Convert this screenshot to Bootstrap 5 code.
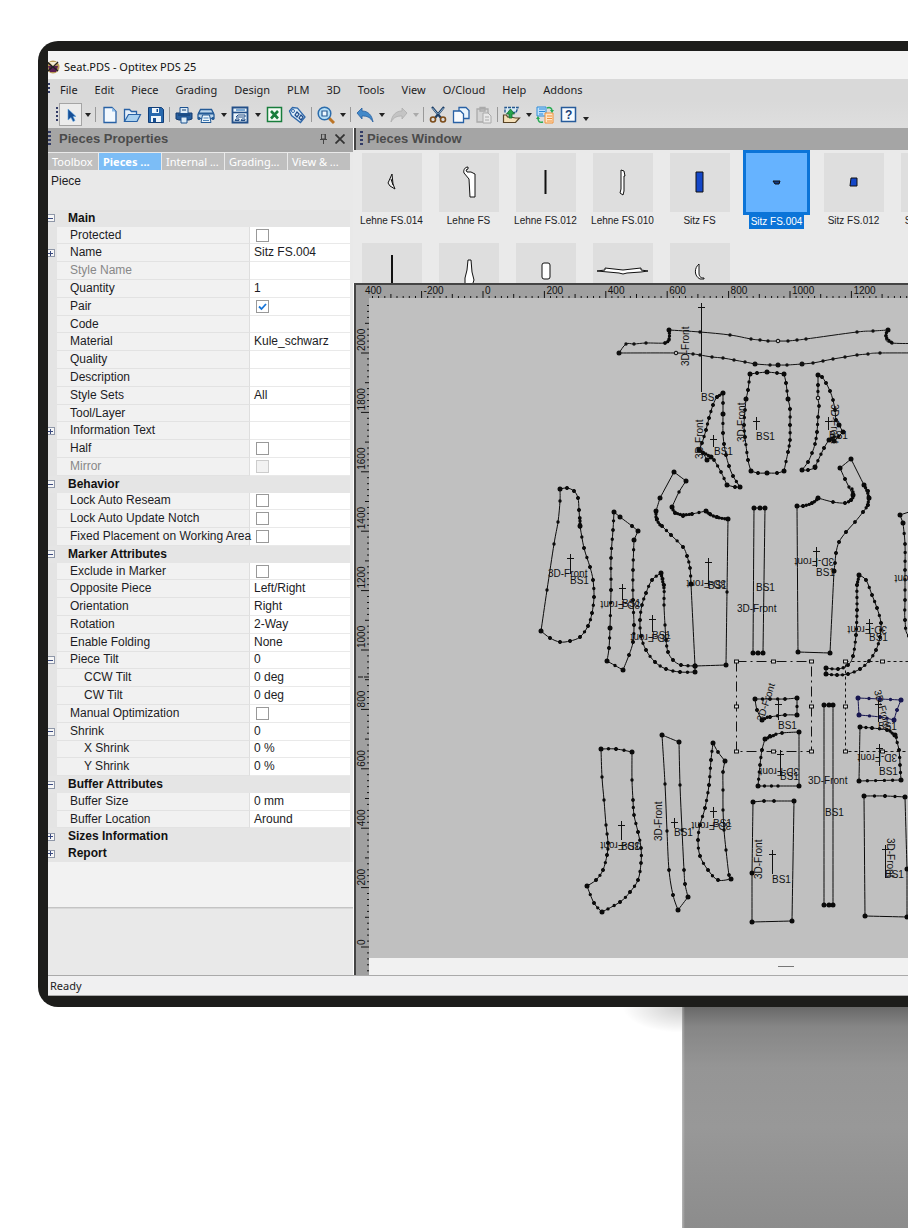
<!DOCTYPE html>
<html lang="en">
<head>
<meta charset="utf-8">
<meta name="viewport" content="width=device-width, initial-scale=1">
<title>Seat.PDS - Optitex PDS 25</title>
<link href="https://cdn.jsdelivr.net/npm/bootstrap@5.3.0/dist/css/bootstrap.min.css" rel="stylesheet">
<style>
body{font-family:"Liberation Sans",Arial,sans-serif;font-size:12px;line-height:16px;color:#1c1c24;background:#fff;overflow-x:hidden}
button{font:inherit;color:inherit;border:0;background:none;padding:0}
.monitor{margin:41px 0 0 38px;padding:10px 0 11px 10px;background:#1d1d1b;border-radius:20px 0 0 20px;position:relative;z-index:1}
.screen{background:#e9e9e9;overflow:hidden}
.ui{font-family:"Noto Sans","Open Sans",sans-serif;font-size:11px}
.titlebar{height:28px;background:#f3f3f3;color:#111;padding-top:3px}
.menus{height:22px;background:#d9d9d9;gap:17px;padding-left:12px;position:relative}
.grip{width:3px;background:repeating-linear-gradient(#333c66 0 2px,transparent 2px 4px)}
.menus .grip{position:absolute;left:0;top:4px;height:12px;width:2px}
.tools{height:27px;background:linear-gradient(#d9d9d9,#dedede);padding-left:8px;position:relative}
.tools .grip{height:16px;width:2px;margin-right:1px}
.tool{width:23px;height:23px;flex:none;display:flex;align-items:center;justify-content:center}
.tool.picked{background:#ececec;outline:1px solid #a5a5a5;outline-offset:-1px}
.drop{width:11px;height:20px;flex:none;display:flex;align-items:center;justify-content:center}
.drop::after{content:"";border:3px solid transparent;border-top:4px solid #222;border-bottom:0}
.drop:disabled::after{border-top-color:#aaa}
.bar{width:5px;height:15px;flex:none;background:linear-gradient(90deg,transparent 2px,#999 2px 3px,transparent 3px)}
.props{width:306px;flex:none;border-right:1px solid #fff}
.pane-title{height:22px;background:#a5a5a5;color:#4b4b4b;font-weight:700;font-size:13px}
.pane-title .grip{height:16px}
.tabs{background:linear-gradient(#a5a5a5 2px,#e9e9e9 2px);padding-top:3px;gap:1px}
.tabs button{height:17px;width:62px;background:#bfbfbf;color:#fff;line-height:17px;white-space:nowrap;overflow:hidden;text-align:left;padding-left:4px}
.tabs button:first-child{width:50px}
.tabs .current{background:#7cbdf6;font-weight:700}
.about{height:40px;padding:3px;line-height:16px}
.grid{width:302px;height:652px;border-collapse:separate;border-spacing:0;table-layout:fixed}
.grid td,.grid th{padding:0;line-height:15px;font-weight:400;vertical-align:middle;white-space:nowrap}
.grid .g{width:9px;background:#e4e4e4;overflow:hidden}
.grid .n{width:193px;background:#f1f1f1;padding-left:13px;border-bottom:1px solid #e2e2e2;border-right:1px solid #dedede;overflow:visible}
.grid .v{background:#fff;border-bottom:1px solid #e9e9e9;padding-left:4px}
.grid .cat th{background:#e5e5e5;font-weight:700;color:#111;padding-left:11px}
.grid .cat .g{background:#e5e5e5}
.grid .sub .n{padding-left:27px}
.grid .off{color:#888}
.grid input{appearance:none;width:13px;height:13px;border:1px solid #999;background:#fff;margin:0 0 0 2px;display:block}
.grid input:disabled{background:#f2f2f2;border-color:#ccc}
.grid input:checked{background:#fff url("data:image/svg+xml,%3Csvg xmlns='http://www.w3.org/2000/svg' viewBox='0 0 11 11'%3E%3Cpath d='M2 5.5l2.500 2.500L9 3' fill='none' stroke='%231976d8' stroke-width='1.800'/%3E%3C/svg%3E")}
.tw{display:block;width:7px;height:8px;border:1px solid #8f97a8;border-left:0;background:linear-gradient(#3a4a80,#3a4a80) 0 50%/5px 1px no-repeat #f6f6f6}
.tw.plus{background:linear-gradient(#3a4a80,#3a4a80) 0 50%/5px 1px no-repeat,linear-gradient(#3a4a80,#3a4a80) 2px 50%/1px 5px no-repeat #f6f6f6}
.blank{height:46px;background:#f2f2f2;border-bottom:1px solid #c4c4c4;box-shadow:0 1px #d8d8d8}
.help-pane{height:67px}
.work{border-left:2px solid #444;min-width:0}
.thumbs{height:133px;overflow:hidden;display:grid;grid-template-columns:repeat(8,77px);grid-auto-rows:90px;border-bottom:0;background:#eaeaea;margin-left:-3px;padding-top:3px}
.thumb{font-size:10px;line-height:12px;display:flex;flex-direction:column;align-items:center;white-space:nowrap}
.thumb svg{width:60px;height:59px;background:#dedede;flex:none}
.thumb span{margin-top:3px;padding:0 1px}
.thumb.on{margin-top:-3px}
.thumb.on svg{width:67px;height:65px;background:#66b3ff;border:3px solid #0b74d8}
.thumb.on span{margin-top:0;padding:0 2px 1px;background:#0b74d8;color:#fff;line-height:13px}
.hruler{height:15px;background:#a0a0a0;border-top:2px solid #444;display:block;width:100%}
.vruler{width:13px;background:#a0a0a0;flex:none}
.canvas{background:#c0c0c0;display:block;width:100%;flex:1 1 0;min-height:0}
.hscroll{height:17px;background:#f1f1f1}
.hscroll i{display:block;width:16px;height:1px;background:#777;position:absolute;left:409px;top:8px}
svg text{font:10px "Liberation Sans",Arial,sans-serif;fill:#111}
.status{height:21px;background:#f0f0f1;border-top:1px solid #aaa;box-shadow:inset 0 -1px #aaa;line-height:20px;padding-left:2px}
.stand{margin-left:682px;flex:1 0 221px;background:linear-gradient(90deg,rgba(255,255,255,.35),transparent 3px),linear-gradient(#686868,#868686 20px,#959595 60px,#989898 120px,#8c8c8c)}
.cast{position:absolute;left:584px;bottom:-26px;width:60px;height:26px;background:radial-gradient(ellipse at 100% 0,rgba(0,0,0,.2),transparent 70%)}
</style>
</head>
<body class="d-flex flex-column min-vh-100">
<main class="monitor">
<div class="screen">
<header class="ui">
<div class="titlebar d-flex align-items-center">
<svg width="12" height="14" viewBox="0 0 12 14"><circle cx="5" cy="7" r="6.500" fill="#b89a58"/><path d="M0 6h10L8 12H2z" fill="#5b1f52"/><path d="M-1 2l11 9M10 2L0 11" stroke="#222" stroke-width="1.600"/><path d="M1 2l4 4 4-4" fill="#f2ead0"/></svg>
<span class="ps-1">Seat.PDS - Optitex PDS 25</span>
</div>
<nav class="menus d-flex align-items-center" aria-label="Main menu"><span class="grip"></span>
<button>File</button><button>Edit</button><button>Piece</button><button>Grading</button><button>Design</button><button>PLM</button><button>3D</button><button>Tools</button><button>View</button><button>O/Cloud</button><button>Help</button><button>Addons</button>
</nav>
<div class="tools d-flex align-items-center" role="toolbar" aria-label="Standard"><span class="grip"></span>
<button class="tool picked" aria-label="Select"><svg width="16" height="16"><path d="M5 2v11l3-2.500 2 4 2-1-2-4h3z" fill="#174f96" stroke="#5ea4e0" stroke-width=".600"/></svg></button><button class="drop" aria-label="Select options"></button><span class="bar"></span>
<button class="tool" aria-label="New"><svg width="18" height="18"><path d="M3 1.500h8l4 4v11H3z" fill="#f2f8fe" stroke="#2861a5" stroke-width="1.300"/><path d="M11 1.500v4h4z" fill="#8dbbe8"/></svg></button>
<button class="tool" aria-label="Open"><svg width="19" height="18"><path d="M1.500 15.500V3.500h5l2 2h5v3" fill="#e5eff9" stroke="#2861a5" stroke-width="1.300"/><path d="M1.500 15.500l4-7h12l-3.500 7z" fill="#a9d0ef" stroke="#2861a5" stroke-width="1.200"/></svg></button>
<button class="tool" aria-label="Save"><svg width="18" height="18"><path d="M1.500 1.500h13l2 2v13h-15z" fill="#2768ad" stroke="#123e78"/><path d="M5 2h7v5H5zM4 10h10v6H4z" fill="#eef5fb"/><path d="M9.500 3h1.500v3H9.500zM6 12h3v4H6z" fill="#174e91"/></svg></button><span class="bar"></span>
<button class="tool" aria-label="Print"><svg width="18" height="18"><path d="M1 7h16v6l-3 1H4l-3-1z" fill="#285f9d" stroke="#143b6e"/><path d="M5 1.500h8v6H5zM6 11h6v6H6z" fill="#dcebf7" stroke="#1d5290"/><path d="M7 4h4M3 9h12" stroke="#123b6c"/></svg></button>
<button class="tool" aria-label="Plot"><svg width="19" height="18"><path d="M3.500 3.500h11l2.500 5v4H1v-4z" fill="#bcd5ea" stroke="#245a96" stroke-width="1.300"/><path d="M1 7.500h16M2 11v3M16 11v3" stroke="#245a96" stroke-width="1.800"/><path d="M5.500 9h7l1.500 7.500H4z" fill="#eaf4fb" stroke="#245a96"/><path d="M6.500 12h5M6 14.500h6" stroke="#4c83b8"/></svg></button><button class="drop" aria-label="Plot options"></button>
<button class="tool" aria-label="Layout"><svg width="19" height="18"><path d="M1.500 1.500h15v15h-15z" fill="#eaf4fb" stroke="#234f88" stroke-width="1.800"/><path d="M2 6.500h15" stroke="#234f88" stroke-width="1.600"/><path d="M5 4h9" stroke="#5b93c8" stroke-width="1.500"/><path d="M5 11l2-2h7v2zM4 14.500l1-1.500h3v1.500zM10 14.500l1-1.500h3v1.500z" fill="#fff" stroke="#234f88"/></svg></button><button class="drop" aria-label="Layout options"></button>
<button class="tool" aria-label="Excel"><svg width="17" height="17"><path d="M1.500 1.500h14v14h-14z" fill="#f4fbf5" stroke="#187d3c" stroke-width="1.500"/><path d="M5 5l7 7.500M12 5l-7 7.500" stroke="#187d3c" stroke-width="2.600"/></svg></button>
<button class="tool" aria-label="Tag"><svg width="19" height="18"><path d="M1.500 5l3-3.500 5 .500 7.500 9-4.500 5.500-9-7z" fill="#dcecf8" stroke="#2f68aa" stroke-width="1.300"/><circle cx="5" cy="5" r="1.500" fill="#fff" stroke="#2f68aa"/><path d="M7 9l2-3 2 2-2 3zM11 12l2-3 2 2-2 3z" fill="none" stroke="#1e4b8b" stroke-width="1.300"/></svg></button><span class="bar"></span>
<button class="tool" aria-label="Zoom"><svg width="18" height="18"><path d="M11 11l6 6" stroke="#bb7527" stroke-width="3"/><circle cx="7.500" cy="7.500" r="6.300" fill="#b7dff6" stroke="#2b6cac" stroke-width="1.500"/><path d="M5 5h5v5H5z" fill="#eff8fe" stroke="#295b91" stroke-width="1.200"/></svg></button><button class="drop" aria-label="Zoom options"></button><span class="bar"></span>
<button class="tool" aria-label="Undo"><svg width="18" height="18"><path d="M1 7l5-5v3c6 0 10 4 11 11-3-5-6-6-11-6v3z" fill="#4389c9" stroke="#235d9e" stroke-width=".800"/></svg></button><button class="drop" aria-label="Undo list"></button>
<button class="tool" aria-label="Redo" disabled><svg width="18" height="18"><path d="M17 7l-5-5v3C6 5 2 9 1 16c3-5 6-6 11-6v3z" fill="#c4c4c4" stroke="#adadad" stroke-width=".800"/></svg></button><button class="drop" aria-label="Redo list" disabled></button><span class="bar"></span>
<button class="tool" aria-label="Cut"><svg width="18" height="18"><path d="M3 1l9 11M15 1L6 12" stroke="#1d3e65" stroke-width="2.200"/><path d="M3.500 2l5 6M14.500 2l-5 6" stroke="#acd1ee" stroke-width=".800"/><circle cx="4" cy="13.500" r="2.500" fill="none" stroke="#7c4c1a" stroke-width="1.600"/><circle cx="14" cy="13.500" r="2.500" fill="none" stroke="#7c4c1a" stroke-width="1.600"/></svg></button>
<button class="tool" aria-label="Copy"><svg width="18" height="18"><path d="M7 1.500h7l3 3v8H7z" fill="#e9f4fc" stroke="#2861a5" stroke-width="1.300"/><path d="M1.500 5h7l3 3v8.500h-10z" fill="#f8fbfe" stroke="#2861a5" stroke-width="1.300"/></svg></button>
<button class="tool" aria-label="Paste" disabled><svg width="18" height="18"><path d="M2 3h11v13H2zM5 1.500h5V5H5z" fill="#d4d4d4" stroke="#aaa" stroke-width="1.300"/><path d="M8 7h5l3 3v7H8zM10 11h4M10 14h4" fill="#e8e8e8" stroke="#aaa"/></svg></button><span class="bar"></span>
<button class="tool" aria-label="Export"><svg width="19" height="18"><path d="M3 6.500V1.500h13l-2 5h-3" fill="#d9eaf6" stroke="#24588f" stroke-width="1.400" stroke-dasharray="3 1"/><path d="M1.500 16.500V9h3l1 2h3l5 1h4l-4 4.500z" fill="#f4dfb8" stroke="#574325" stroke-width="1.200"/><path d="M7 12V8H4.500L8.500 3l4 5H10v4z" fill="#26a44b" stroke="#166b32" stroke-width=".800"/></svg></button><button class="drop" aria-label="Export options"></button>
<button class="tool" aria-label="Convert"><svg width="19" height="18"><path d="M1 1h9v9H1zM3 3h6M3 5.500h6M3 8h4" fill="#bfe0fa" stroke="#2c8ad9"/><path d="M9 7h8v10H9zM11 10h5M11 12.500h5M11 15h5" fill="#ffe5c5" stroke="#f0923b"/><path d="M11 2c3-1 5 0 5 3M7 16c-4 1-5-1-5-4" fill="none" stroke="#27ab54" stroke-width="1.500"/><path d="M14 4h4l-2 3zM0 13h4l-2-3z" fill="#27ab54"/></svg></button>
<button class="tool" aria-label="Help"><svg width="17" height="17"><path d="M1.500 1.500h14v14h-14z" fill="#f7fbff" stroke="#275b9b" stroke-width="1.500"/><text x="5" y="13" style="font-size:12px;font-weight:700;fill:#173f78">?</text></svg></button><button class="drop mt-2" aria-label="More"></button>
</div>
</header>
<div class="d-flex">
<section class="props">
<h2 class="pane-title d-flex align-items-center m-0"><span class="grip me-2"></span><span class="me-auto ms-n2">Pieces Properties</span>
<button class="me-2" aria-label="Pin"><svg width="7" height="10" class="d-block"><path d="M1.500 0v5h4V0zM0 5.500h7M3.500 5v5M5 0v5" fill="none" stroke="#444"/></svg></button>
<button class="me-2" aria-label="Close"><svg width="10" height="10" class="d-block"><path d="M.500.500l9 9M9.500.500l-9 9" stroke="#333" stroke-width="1.800"/></svg></button></h2>
<div class="tabs d-flex ui"><button>Toolbox</button><button class="current">Pieces ...</button><button>Internal ...</button><button>Grading...</button><button>View &amp; ...</button></div>
<div class="about">Piece</div>
<table class="grid">
<colgroup><col style="width:9px"><col style="width:193px"><col></colgroup>
<tbody>
<tr class="cat"><td class="g"><span class="tw"></span></td><th colspan="2">Main</th></tr>
<tr><td class="g"></td><td class="n"><label for="c1">Protected</label></td><td class="v"><input type="checkbox" id="c1"></td></tr>
<tr><td class="g"><span class="tw plus"></span></td><td class="n">Name</td><td class="v">Sitz FS.004</td></tr>
<tr><td class="g"></td><td class="n off">Style Name</td><td class="v"></td></tr>
<tr><td class="g"></td><td class="n">Quantity</td><td class="v">1</td></tr>
<tr><td class="g"></td><td class="n"><label for="c2">Pair</label></td><td class="v"><input type="checkbox" id="c2" checked></td></tr>
<tr><td class="g"></td><td class="n">Code</td><td class="v"></td></tr>
<tr><td class="g"></td><td class="n">Material</td><td class="v">Kule_schwarz</td></tr>
<tr><td class="g"></td><td class="n">Quality</td><td class="v"></td></tr>
<tr><td class="g"></td><td class="n">Description</td><td class="v"></td></tr>
<tr><td class="g"></td><td class="n">Style Sets</td><td class="v">All</td></tr>
<tr><td class="g"></td><td class="n">Tool/Layer</td><td class="v"></td></tr>
<tr><td class="g"><span class="tw plus"></span></td><td class="n">Information Text</td><td class="v"></td></tr>
<tr><td class="g"></td><td class="n"><label for="c3">Half</label></td><td class="v"><input type="checkbox" id="c3"></td></tr>
<tr><td class="g"></td><td class="n off"><label for="c4">Mirror</label></td><td class="v"><input type="checkbox" id="c4" disabled></td></tr>
<tr class="cat"><td class="g"><span class="tw"></span></td><th colspan="2">Behavior</th></tr>
<tr><td class="g"></td><td class="n"><label for="c5">Lock Auto Reseam</label></td><td class="v"><input type="checkbox" id="c5"></td></tr>
<tr><td class="g"></td><td class="n"><label for="c6">Lock Auto Update Notch</label></td><td class="v"><input type="checkbox" id="c6"></td></tr>
<tr><td class="g"></td><td class="n"><label for="c7">Fixed Placement on Working Area</label></td><td class="v"><input type="checkbox" id="c7"></td></tr>
<tr class="cat"><td class="g"><span class="tw"></span></td><th colspan="2">Marker Attributes</th></tr>
<tr><td class="g"></td><td class="n"><label for="c8">Exclude in Marker</label></td><td class="v"><input type="checkbox" id="c8"></td></tr>
<tr><td class="g"></td><td class="n">Opposite Piece</td><td class="v">Left/Right</td></tr>
<tr><td class="g"></td><td class="n">Orientation</td><td class="v">Right</td></tr>
<tr><td class="g"></td><td class="n">Rotation</td><td class="v">2-Way</td></tr>
<tr><td class="g"></td><td class="n">Enable Folding</td><td class="v">None</td></tr>
<tr><td class="g"><span class="tw"></span></td><td class="n">Piece Tilt</td><td class="v">0</td></tr>
<tr class="sub"><td class="g"></td><td class="n">CCW Tilt</td><td class="v">0 deg</td></tr>
<tr class="sub"><td class="g"></td><td class="n">CW Tilt</td><td class="v">0 deg</td></tr>
<tr><td class="g"></td><td class="n"><label for="c9">Manual Optimization</label></td><td class="v"><input type="checkbox" id="c9"></td></tr>
<tr><td class="g"><span class="tw"></span></td><td class="n">Shrink</td><td class="v">0</td></tr>
<tr class="sub"><td class="g"></td><td class="n">X Shrink</td><td class="v">0 %</td></tr>
<tr class="sub"><td class="g"></td><td class="n">Y Shrink</td><td class="v">0 %</td></tr>
<tr class="cat"><td class="g"><span class="tw"></span></td><th colspan="2">Buffer Attributes</th></tr>
<tr><td class="g"></td><td class="n">Buffer Size</td><td class="v">0 mm</td></tr>
<tr><td class="g"></td><td class="n">Buffer Location</td><td class="v">Around</td></tr>
<tr class="cat"><td class="g"><span class="tw plus"></span></td><th colspan="2">Sizes Information</th></tr>
<tr class="cat"><td class="g"><span class="tw plus"></span></td><th colspan="2">Report</th></tr>
</tbody></table>
<div class="blank"></div><div class="help-pane"></div>
</section>
<section class="work flex-grow-1 d-flex flex-column">
<h2 class="pane-title d-flex align-items-center m-0"><span class="grip ms-1 me-1"></span><span>Pieces Window</span></h2>
<div class="thumbs">
<button class="thumb"><svg viewBox="0 0 60 59"><path d="M30 21l-4 9 2 3 5 3-2-5zM29 26l2 6" fill="#eee" stroke="#111"/></svg><span>Lehne FS.014</span></button>
<button class="thumb"><svg viewBox="0 0 60 59"><path d="M29 14c-3 0-5 3-4 6l5 6 1 18h5V21l-4-2h-4l-1-2 2-1z" fill="#fff" stroke="#111"/></svg><span>Lehne FS</span></button>
<button class="thumb"><svg viewBox="0 0 60 59"><path d="M29.500 17v24" stroke="#111" stroke-width="2"/></svg><span>Lehne FS.012</span></button>
<button class="thumb"><svg viewBox="0 0 60 59"><path d="M28 17v19l-1 4 3 2 1-4V23h1l-1-5z" fill="#fff" stroke="#111"/></svg><span>Lehne FS.010</span></button>
<button class="thumb"><svg viewBox="0 0 60 59"><path d="M26 19h7v20h-7z" fill="#1447c8" stroke="#111"/></svg><span>Sitz FS</span></button>
<button class="thumb on"><svg viewBox="0 0 61 59"><path d="M27 28h7l-1 3h-4z" fill="#123c86" stroke="#111"/></svg><span>Sitz FS.004</span></button>
<button class="thumb"><svg viewBox="0 0 60 59"><path d="M27 25h6v8h-7z" fill="#1447c8" stroke="#111"/></svg><span>Sitz FS.012</span></button>
<button class="thumb"><svg viewBox="0 0 60 59"></svg><span>Sitz FS.010</span></button>
<button class="thumb" aria-label="Piece 9"><svg viewBox="0 0 60 59"><path d="M30 12v40" stroke="#111" stroke-width="2"/></svg></button>
<button class="thumb" aria-label="Piece 10"><svg viewBox="0 0 60 59"><path d="M29 17h3l1 12 2 8-2 6h-7v-8l2-8z" fill="#fff" stroke="#111"/></svg></button>
<button class="thumb" aria-label="Piece 11"><svg viewBox="0 0 60 59"><rect x="26" y="20" width="8" height="16" rx="2" fill="#fff" stroke="#111"/></svg></button>
<button class="thumb" aria-label="Piece 12"><svg viewBox="0 0 60 59"><path d="M4 28l8-1v-2l18 2 18-2v2l7 1-7 1-14 1-4 1-4-1z" fill="#fff" stroke="#111"/></svg></button>
<button class="thumb" aria-label="Piece 13"><svg viewBox="0 0 60 59"><path d="M29 21c-5 4-5 12 1 15h4v-1c-4 0-5-2-5-5z" fill="#fff" stroke="#111"/></svg></button>
</div>
<svg class="hruler" id="hr"></svg>
<div class="d-flex flex-grow-1">
<svg class="vruler" id="vr"></svg>
<div class="d-flex flex-column flex-grow-1">
<svg class="canvas" role="img" aria-label="Working area"><g transform="translate(-369 -298)" id="area"></g></svg>
<div class="hscroll position-relative"><i></i></div>
</div>
</div>
</section>
</div>
<footer class="status ui">Ready</footer>
</div>
<div class="cast"></div>
</main>
<div class="stand"></div>
<script src="https://cdn.jsdelivr.net/npm/bootstrap@5.3.0/dist/js/bootstrap.bundle.min.js"></script>
<script>
// Rulers: one small tick per 20 units, a longer one per 100, a label per 200.
const hr=document.getElementById('hr'),room=Math.min(hr.getBoundingClientRect().width,innerWidth-hr.getBoundingClientRect().left);
let h='';
for(let i=-18;;i++){const x=127+i*6.14,L=i%10===0?7:i%5===0?4:2;if(x>room)break;h+=`<path d="M${x.toFixed(1)} ${13-L}V13" stroke="#111"/>`;if(L===7)h+=`<text x="${x+2}" y="9">${i*20||0}</text>`}
h+='<text x="9" y="9">400</text>';
hr.innerHTML=h;
let v='';
for(let i=-4;i<109;i++){const y=649-i*5.94,L=i%10===0?8:i%5===0?4:2;v+=`<path d="M${13-L} ${y.toFixed(1)}H13" stroke="#111"/>`;if(L===8)v+=`<text transform="translate(9 ${y-2}) rotate(-90)">${i*20}</text>`}
v+='<path d="M2 379H13" stroke="#111" stroke-dasharray="5 1"/>';
document.getElementById('vr').innerHTML=v;

// Pattern pieces: closed outlines; "*" marks a corner node, other runs carry small nodes at the given spacing.
const pieces=[
[9,'560,489* 567,488 574,491 578,498 579,510 580,526* 584,548 590,567 593,580 594,597 592,613 588,626 580,637 570,641 560,642 550,638 541,631* 547,590 554,544 558,522 560,501',[16,17,18,19,20]],
[11,'614,512* 620,517* 632,526 638,531* 634,540* 633,570 633,600 634,625 633,642 629,655 623,670* 607,661* 609,648 610,628* 611,590 611,558 613,530'],
[7,'661,573* 664,585 664,605 665,625 666,640 668,652 673,660 681,665 695,666* 695,672* 680,672 666,669 655,662 646,650 641,636 640,620 642,605 646,593 652,580',[2,3]],
[8,'674,472* 686,481* 679,492 672,507* 675,513 683,516 692,514 706,511* 710,514 717,517 728,519* 727,592 726,665* 695,666* 691,584* 690,568 687,556 683,547 671,535 662,526 657,519 656,511* 660,498*',[0,1,2,10,11,12,13,21,22]],
[8,'723,393* 723,403 723,414* 723,433 724,444 726,455 729,466 733,476 740,487* 735,487 727,485* 721,472 714,460 711,457* 707,460* 703,453 699,450* 702,443 706,430 709,418 713,405 717,397'],
[8,'750,374* 757,373 767,372* 777,373 784,374* 786,383 788,399* 790,409 790,425 790,440 788,452 784,471* 777,473 767,473* 758,473 751,471* 748,460 745,437 744,425 745,410 746,399* 748,390'],
[8,'818,375* 822,377 826,383 830,391 833,400 835,410 836,420 839,425* 843,432* 834,441* 829,440* 824,448 815,467* 815,468 808,470 802,470* 808,462 812,453 815,444 817,432 818,417 819,406 818,398 818,385'],
[9,'797,506* 803,506 812,503 818,498* 833,502 845,503 851,500 853,495* 845,479 840,468* 851,459* 864,485* 868,491 869,498* 868,505 863,512 855,522 846,532 839,542 836,553 835,563 834,571* 830,653* 798,652*',[3,9,10,21,22,23]],
[7,'859,575* 866,580 872,595 877,608 881,623 880,637 876,650 869,661 860,669 848,674 837,675 826,674* 826,668* 838,669 848,665 853,656 856,635 857,610 857,585'],
[99,'754,508* 760,508* 765,508* 763,653* 758,653* 753,653*'],
[99,'824,705* 829,705* 833,705* 833,905* 829,905* 824,905*'],
[10,'900,515* 903,523* 905,544 905,570 905,600 905,620 909,636 930,636* 930,505*'],
[10,'755,699* 770,699 785,699 797,698* 797,715* 785,715 770,717 762,720* 757,710'],
[8,'799,732* 782,733 770,736 765,739* 762,750 760,765 758,786* 778,786 799,786*',[0,7,8]],
[12,'753,802* 764,801 774,801 794,801* 792,921* 752,922* 752,873*',[2,3,4,5,6]],
[9,'858,698* 880,699 901,700* 897,710 894,720* 880,717 859,715*',[6],'#171650'],
[8,'860,727* 872,728 887,730 895,735* 899,750 900,765 901,780* 859,781*',[7]],
[12,'864,796* 885,796 905,797* 907,869* 907,917* 865,916*',[2,3,4,5]],
[8,'601,749* 616,749 632,752* 632,780 633,800 634,815 638,832 641,848 641,863 638,880 630,892 620,902 602,912* 594,903 587,886* 596,880 603,870 607,855 608,843 606,825 604,800 602,777',[2,3,19,20,21]],
[20,'662,735* 679,742* 680,785 682,830 684,870 685,884 688,897* 678,910* 673,895 669,870 667,831 665,784',[0,1,2,3,9,10,11]],
[9,'713,743* 718,752 725,761* 723,772 723,790 723,810 724,830 726,850 729,875 731,879* 718,880 708,870 700,856 698,840 700,825 705,808 709,785 711,760',[3,4,5,6,7]],
[99,'619,353* 626,344 634,344 646,343 665,343 669,340 669,330* 700,332 730,335 751,339 760,340 768,341 778,341 788,341 797,340 806,339 857,332 873,331 888,330* 886,336 892,343 940,343* 940,353* 880,353 868,354 857,355 845,357 833,359 823,361 813,363 802,364* 787,365 778,365* 770,365 755,364* 745,362 734,360 723,358 712,357 700,355 693,354 676,353',[0],'#111',1]
];
let s='';
for(const [gap,str,bare=[],col='#0a0a0a',own] of pieces){
  const p=str.split(' ').map(t=>({x:parseFloat(t),y:parseFloat(t.split(',')[1]),c:t.endsWith('*')})),n=p.length;
  let nodes='',line=`M${p[0].x} ${p[0].y}`;
  p.forEach((a,i)=>{
    const b=p[(i+1)%n],z=a.c?a:p[(i-1+n)%n],e=b.c?b:p[(i+2)%n];
    const seg=`C${a.x+(b.x-z.x)/6} ${a.y+(b.y-z.y)/6} ${b.x-(e.x-a.x)/6} ${b.y-(e.y-a.y)/6} ${b.x} ${b.y}`;
    line+=seg;
    const len=Math.hypot(b.x-a.x,b.y-a.y),k=Math.max(1,Math.round(len/gap));
    if(!own&&gap<99&&!bare.includes(i))s+=`<path d="M${a.x} ${a.y}${seg}" fill="none" stroke="${col}" stroke-width="3.400" stroke-linecap="round" stroke-dasharray="0 ${(len/k).toFixed(2)}"/>`;
    nodes+=`<circle cx="${a.x}" cy="${a.y}" r="${a.c?2.5:1.7}" fill="${col}"/>`;
  });
  s+=`<path d="${line}" fill="none" stroke="${col}" stroke-width="1"/>`+nodes;
}
// Tight runs of nodes on sharp curves
for(const d of ['M665 343Q671 342 669 330','M888 330Q882 338 893 343','M672 507Q674 517 692 514','M706 511Q712 518 728 519','M656 511V519L660 525','M852 489Q856 499 848 502','M864 485Q872 498 866 508','M803 506Q814 504 818 498','M717 397L723 393','M711 457L699 450','M580 518V530','M765 739L775 735','M829 440L836 436','M890 731L897 738','M661 573L664 588','M857 585L859 576','M762 720L770 716'])
  s+=`<path d="${d}" fill="none" stroke="#0a0a0a" stroke-width="3.400" stroke-linecap="round" stroke-dasharray="0 3"/>`;
// Open nodes at mid-edge
for(const [x,y] of [[676,353],[778,341],[818,398]])s+=`<circle cx="${x}" cy="${y}" r="1.800" fill="#c0c0c0" stroke="#0a0a0a"/>`;
// Grain lines: x, top, bottom
for(const [x,a,b] of [[701,303,392],[570,554,574],[622,584,600],[652,615,632],[708,558,586],[713,435,447],[756,417,430],[828,417,430],[816,547,567],[869,619,634],[778,700,720],[780,750,776],[772,850,874],[878,700,722],[879,744,766],[885,845,878],[621,821,840],[674,818,828],[713,807,818]])
  s+=`<path d="M${x+.5} ${a}V${b}M${x-3} ${a+4}.5H${x+4}" stroke="#111"/>`;
// Labels: x, y, angle
for(const [x,y,r] of [[689,366,-90],[703,459,-90],[745,442,-90],[831,404,90],[548,577,0],[640,601,180],[670,634,180],[726,580,180],[737,612,0],[834,558,180],[887,626,180],[934,575,180],[763,722,-72],[799,768,180],[808,784,0],[762,879,-90],[874,691,74],[897,754,180],[887,838,90],[640,842,180],[662,841,-90],[731,822,180]])
  s+=`<text transform="translate(${x} ${y}) rotate(${r})">3D-Front</text>`;
for(const [x,y,t] of [[701,401,'BS'],[714,455],[756,440],[829,439],[570,584],[622,607],[652,639],[708,589],[756,591],[816,576],[869,641],[778,729],[780,780],[825,816],[772,883],[878,730],[879,775],[885,878],[621,850],[674,836],[713,827]])
  s+=`<text x="${x}" y="${y}">${t||'BS1'}</text>`;
// Selection frames with handles
for(const [x,dash] of [[736,'10 4 2 4'],[845,'3 3']]){
  s+=`<rect x="${x+.5}" y="661.5" width="75" height="90" fill="none" stroke="#111" stroke-dasharray="${dash}"/>`;
  for(const i of [0,37,75])for(const j of [0,45,90])if(i!==37||j!==45)s+=`<rect x="${x+i-1.5}" y="${660+j}" width="4" height="3" fill="#ddd" stroke="#111"/>`;
}
document.getElementById('area').innerHTML=s;
</script>
</body>
</html>
